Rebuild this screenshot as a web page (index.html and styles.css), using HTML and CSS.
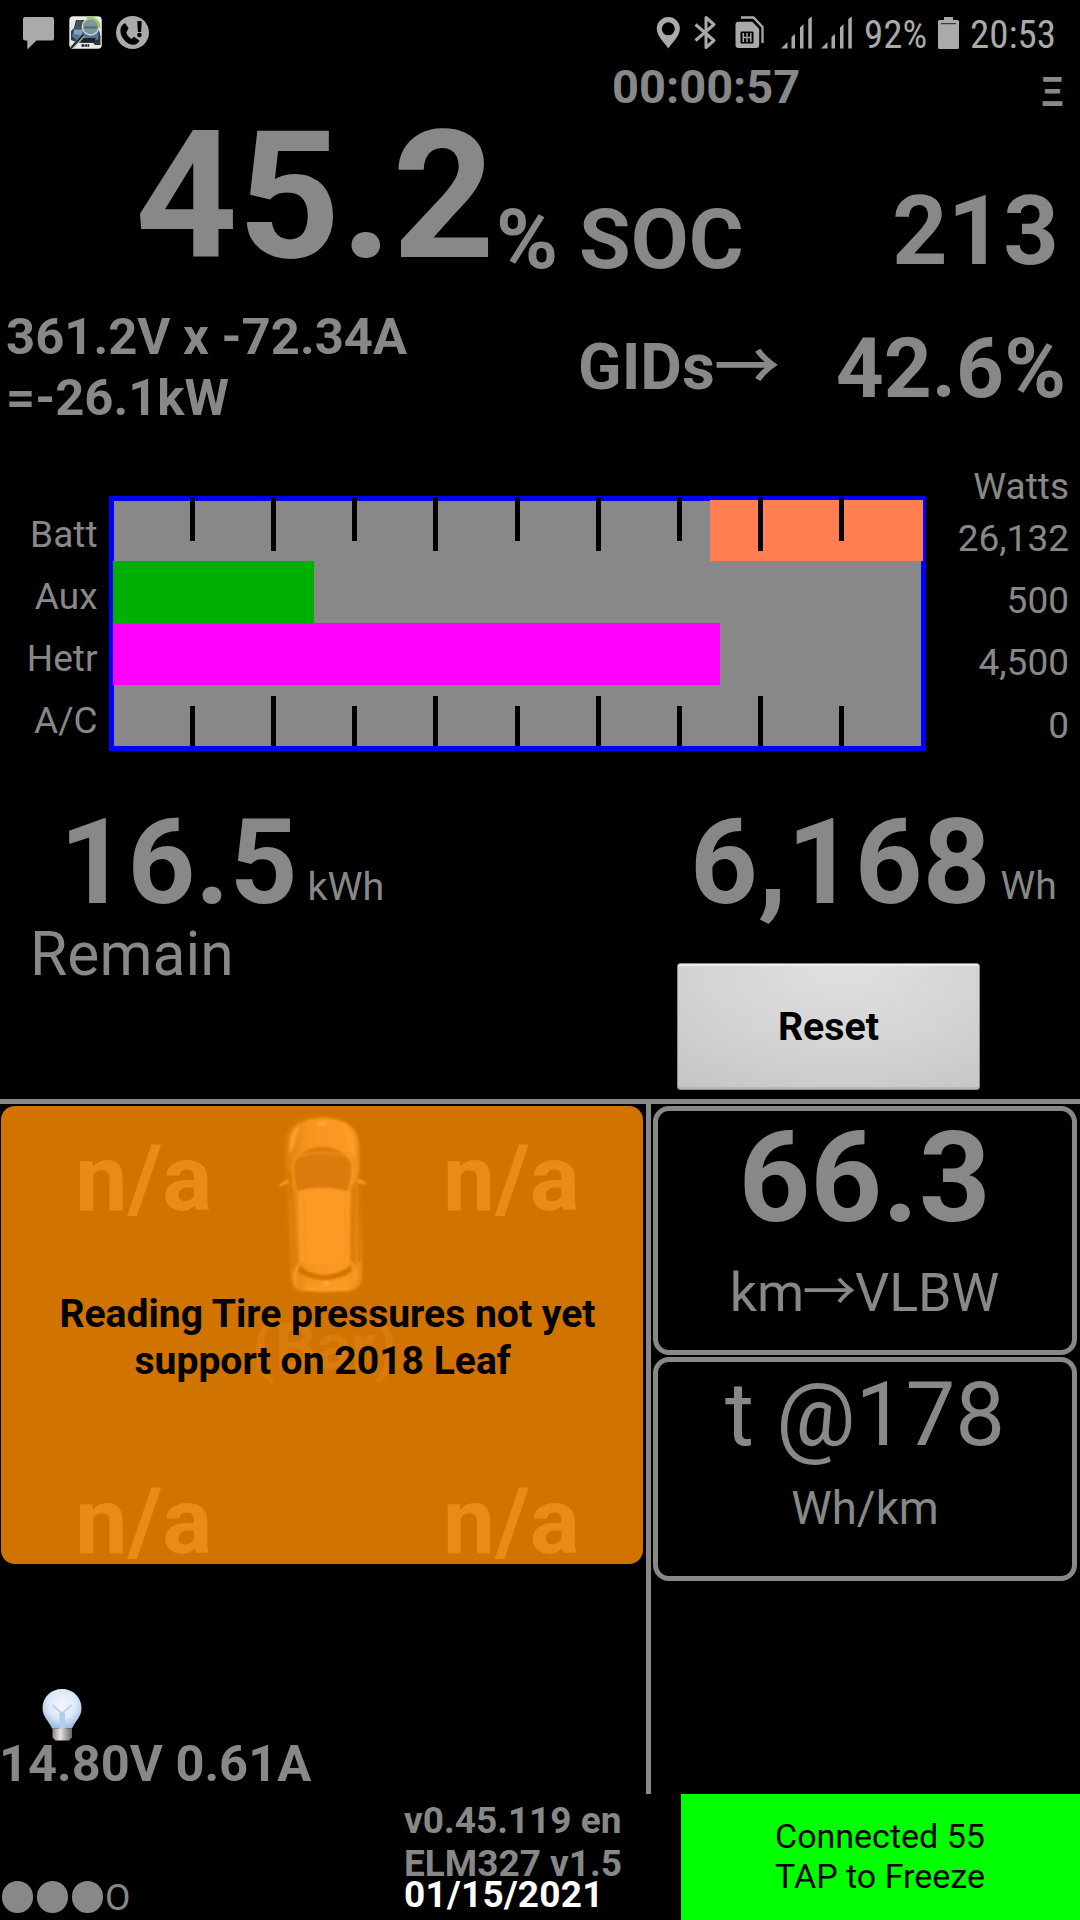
FILE: index.html
```html
<!DOCTYPE html>
<html lang="en">
<head>
<meta charset="utf-8">
<title>Battery monitor</title>
<link rel="stylesheet" href="styles.css">
</head>
<body>
<div class="screen">
  <header class="statusbar">
    <svg class="status-left" width="126" height="33" viewBox="23 16 126 33">
      <path fill="#aaa" d="M25 17h27a2 2 0 0 1 2 2v19.500a2 2 0 0 1-2 2H36.500L27.300 49.500V40.500H25a2 2 0 0 1-2-2V19a2 2 0 0 1 2-2z"/>
      <rect x="69.300" y="16.300" width="32.500" height="32.500" rx="4" fill="#e8eaea"/>
      <path fill="#2c3b40" d="M76 20h19l4 10 1.500 6v9H95l-2-2H79l-3-1-5-2V31l3-3z"/>
      <path fill="#48545a" d="M77 20.500h16l3 8H74.500z"/>
      <path fill="#4f7696" d="M74 28.500h22l3 6-1 5-10 2H78l-6-5z"/>
      <path fill="#7da2bd" d="M74 30h9l-2 5-7-1z"/>
      <path fill="#1a2228" d="M79 38h17l-2 4H82z"/>
      <path stroke="#b9bec0" stroke-width="3.600" d="M72 48 83.500 35"/>
      <path stroke="#222" stroke-width="2" d="M71 48 83.500 34.500"/>
      <circle cx="90.700" cy="26.700" r="8.300" fill="#7c969c" stroke="#ccd2cf" stroke-width="1.500"/>
      <path fill="none" stroke="#9ccb55" stroke-width="2.600" d="M87 18.800a9 9 0 0 1 12 6v3"/>
      <path stroke="#516b75" stroke-width="2" d="M84 27.500h13"/>
      <path stroke="#222" stroke-width="2.500" stroke-dasharray="3 .7 2.300 .5" d="M81.500 45.500h7.700"/>
      <circle cx="132.500" cy="32.500" r="16.500" fill="#aaa"/>
      <path fill="#000" d="M125 23l3.600 5.200-2.300 4.300c.8 2.800 2.600 5.200 5.200 6.500l2.400-2.300 5.500 3.800c-1 2.500-3.200 4.300-6 4.300-6.700 0-13.300-7.600-13-14.800.1-3.200 2-5.800 4.600-7z"/>
      <path fill="#000" d="M137.300 21h4.400l-.6 11h-3.200z"/>
      <circle cx="139.400" cy="35" r="2.300"/>
    </svg>
    <svg class="status-right" width="196" height="34" viewBox="656 16 196 34">
      <path fill="#aaa" fill-rule="evenodd" d="M668.300 17a11.600 11.600 0 0 1 11.600 11.600c0 7-6.500 13-11.600 19.900-5-6.900-11.600-12.900-11.600-19.900A11.600 11.600 0 0 1 668.300 17zm0 5.300a6.500 6.500 0 1 0 0 13 6.500 6.500 0 0 0 0-13z"/>
      <path fill="none" stroke="#aaa" stroke-width="3" stroke-linejoin="round" d="M695.500 24.500 714 40.500 706 47.500V17.500L714 24.500 695.500 40.500"/>
      <path fill="none" stroke="#aaa" stroke-width="2.300" d="M741 17.500h12.500l9 9.500v16"/>
      <path fill="#aaa" d="M738.500 21.700h13.800l6.900 7V45a3 3 0 0 1-3 3h-17.700a3 3 0 0 1-3-3V24.700a3 3 0 0 1 3-3z"/>
      <rect x="740.500" y="31.500" width="13" height="12" rx="1" fill="#000"/>
      <path fill="none" stroke="#aaa" stroke-width="1.500" d="M743.300 33v9M747 33v3.500M747 38.500v3.500M750.800 33v9M742.800 37.500h8.500"/>
      <path fill="#aaa" d="M781 48.500 787.500 42v6.500zM791.500 37l3.500-3v14.500h-3.500zM800 27.500l3.500-3.200v24.200H800zM808.300 19l3.500-2.500v32h-3.500z"/>
      <path fill="#aaa" d="M821 48.500 827.500 42v6.500zM831.500 37l3.500-3v14.500h-3.500zM840 27.500l3.500-3.200v24.200H840zM848.300 19l3.500-2.500v32h-3.500z"/>
    </svg>
    <span class="status-text battery-pct">92%</span>
    <svg class="battery" width="21" height="32" viewBox="0 0 21 32">
      <path fill="#aaa" d="M6 0h9v3h4.500a1.500 1.500 0 0 1 1.500 1.500V30.500a1.500 1.500 0 0 1-1.500 1.500h-18A1.500 1.500 0 0 1 0 30.500V4.500A1.500 1.500 0 0 1 1.500 3H6z"/>
      <path stroke="#222" stroke-width="1" d="M3 6.700h15"/>
    </svg>
    <span class="status-text clock">20:53</span>
  </header>

  <div class="trip-row">
    <span class="timer">00:00:57</span>
    <span class="menu">Ξ</span>
  </div>

  <div class="soc-row">
    <span class="soc">45.2</span>
    <span class="soc-unit">% SOC</span>
    <span class="gids">213</span>
  </div>

  <div class="power-row">
    <p class="power">361.2V x -72.34A<br>=-26.1kW</p>
    <span class="gids-label">GIDs<span class="arrow bold-arrow">→</span></span>
    <span class="gids-pct">42.6%</span>
  </div>

  <section class="usage">
    <div class="labels"><span>Batt</span><span>Aux</span><span>Hetr</span><span>A/C</span></div>
    <svg class="chart" width="817" height="256" viewBox="109 496 817 256" shape-rendering="crispEdges">
      <rect x="109" y="496" width="817" height="255" fill="#00f"/>
      <rect x="114" y="501" width="807" height="245" fill="#888"/>
      <rect x="710" y="500" width="213" height="61" fill="#ff7f50"/>
      <rect x="113" y="561" width="201" height="62" fill="#00b000"/>
      <rect x="113" y="623" width="607" height="62" fill="#f0f"/>
      <path fill="none" stroke="#000" stroke-width="5" d="M192.500 497v44M273.500 497v54M354.500 497v44M435.500 497v54M517.500 497v44M598.500 497v54M679.500 497v44M760.500 497v54M841.500 497v44M192.500 706v40M273.500 696v50M354.500 706v40M435.500 696v50M517.500 706v40M598.500 696v50M679.500 706v40M760.500 696v50M841.500 706v40"/>
    </svg>
    <div class="watts"><span class="watts-title">Watts</span><span>26,132</span><span>500</span><span>4,500</span><span>0</span></div>
  </section>

  <section class="energy">
    <div class="remain">
      <div class="reading"><span class="big">16.5</span><span class="unit">kWh</span></div>
      <span class="remain-label">Remain</span>
    </div>
    <div class="used">
      <div class="reading"><span class="big">6,168</span><span class="unit">Wh</span></div>
      <button class="reset" type="button">Reset</button>
    </div>
  </section>

  <main class="lower">
    <div class="left">
      <section class="tires">
        <div class="tire-row"><span>n/a</span><span>n/a</span></div>
        <div class="tire-row"><span>n/a</span><span>n/a</span></div>
        <svg class="car" width="100" height="190" viewBox="275 1110 100 190">
          <defs>
            <linearGradient id="body" x1="0" x2="1"><stop offset="0" stop-color="#de8110"/><stop offset=".3" stop-color="#f8961f"/><stop offset=".8" stop-color="#fb9922"/><stop offset="1" stop-color="#e98c18"/></linearGradient>
            <filter id="soft" x="-20%" y="-10%" width="140%" height="120%"><feGaussianBlur stdDeviation="2"/></filter>
            <filter id="fine"><feGaussianBlur stdDeviation=".8"/></filter>
          </defs>
          <path fill="#dc7e0d" filter="url(#soft)" d="M286 1145c0-18 12-27 35-28 24 0 37 10 38 28l4 130c0 10-6 17-16 17h-42c-8 0-11-6-11-14z"/>
          <g filter="url(#fine)">
            <path fill="url(#body)" d="M288 1146c0-17 12-27 35-28 24 0 36 10 37 28l3 130c0 9-6 14-15 15h-44c-8 0-11-6-12-14z"/>
            <path fill="none" stroke="#d27606" stroke-width="2.500" d="M291 1172l3 96M360 1172v90"/>
            <path fill="#ff9f2c" d="M301 1124c-8 6-12 14-10 30 5-8 7-20 10-30zM344 1124c10 6 13 18 12 36-6-9-9-24-12-36z"/>
            <path fill="#ff9f2c" d="M280 1187c1-4 5-6 9-7v3zM359 1179c4 1 8 3 9 6l-10-3z"/>
            <path fill="#d97c0b" stroke="#f9971f" stroke-width="1.500" d="M294 1164c6-12 16-18 29-18s24 6 30 18c0 9-1 20-4 28-17-5-35-5-51 0-3-8-4-20-4-28z"/>
            <path fill="none" stroke="#ea8b18" stroke-width="2.500" d="M301 1156c13-4 33-4 45 0"/>
            <path fill="#de7f0e" d="M295 1187l4 78-5 6-4-70zM352 1187l-2 76 7 6 1-90z"/>
            <path fill="#fd9a26" d="M299 1192c17-4 34-4 51 0l1 70c-17 2-33 2-50 0z"/>
            <path fill="none" stroke="#ee8d19" d="M304 1194l3 67M346 1194v67"/>
            <path fill="none" stroke="#ff9e2a" stroke-width="2" d="M300 1264c-4 6-5 14-3 22M352 1262c5 6 6 13 3 20"/>
            <path fill="#d17400" d="M300 1265c14 13 36 13 52 0l1 6c-14 12-38 12-54 1z"/>
            <path fill="none" stroke="#ffa12e" stroke-width="2.500" d="M306 1288c12 3 29 3 43 0"/>
            <path fill="#ffac40" d="M319 1122h8v3h-8zM325 1281h5v4h-5z"/>
          </g>
        </svg>
        <span class="tire-unit">(Bar)</span>
        <p class="tire-note">Reading Tire pressures not yet<br>support on 2018 Leaf&nbsp;</p>
      </section>
      <div class="aux">
        <svg class="bulb" width="42" height="54" viewBox="0 0 42 54">
          <defs>
            <radialGradient id="glass" cx=".5" cy=".38" r=".6"><stop offset="0" stop-color="#f1f6ff"/><stop offset=".6" stop-color="#dde9fa"/><stop offset="1" stop-color="#a3bfe6"/></radialGradient>
            <linearGradient id="cap" x1="0" x2="1"><stop offset="0" stop-color="#8f8a89"/><stop offset=".4" stop-color="#e8e2e0"/><stop offset="1" stop-color="#686463"/></linearGradient>
            <filter id="glow"><feGaussianBlur stdDeviation=".7"/></filter>
          </defs>
          <g filter="url(#glow)">
            <path fill="url(#glass)" d="M22 1c11 0 19.500 8 19.500 19 0 9-6 12.500-9.500 20.500H12C9 33 2.500 29 2.500 20 2.500 9 11 1 22 1z"/>
            <path fill="#b3cdea" d="M19.500 25h5.500v16h-5.500z"/>
            <path fill="none" stroke="#bdc8dc" stroke-width="1.500" d="M12.500 17l9.500 8.500 9.500-8.500"/>
            <path fill="url(#cap)" d="M12.500 40.500h19.500v9l-3 3H15.500l-3-3z"/>
          </g>
        </svg>
        <span class="aux-reading">14.80V 0.61A</span>
      </div>
    </div>
    <div class="right">
      <section class="card range"><span class="range-value">66.3</span><span class="range-unit">km<span class="arrow thin-arrow">→</span>VLBW</span></section>
      <section class="card rate"><span class="rate-value">t @178</span><span class="rate-unit">Wh/km</span></section>
    </div>
  </main>

  <footer class="footer">
    <div class="pages"><i></i><i></i><i></i><span>O</span></div>
    <div class="about"><span>v0.45.119 en</span><span>ELM327 v1.5</span><span class="date">01/15/2021</span></div>
    <div class="connection">Connected 55<br>TAP to Freeze</div>
  </footer>
</div>
</body>
</html>
```
FILE: styles.css
```css
* { box-sizing: border-box; }

body {
  margin: 0;
  background: #000;
  color: #888;
  font-family: Roboto, "Noto Sans CJK JP", sans-serif;
  line-height: 1;
}

p { margin: 0; }
svg { display: block; flex: none; }

.screen {
  width: 1080px;
  height: 1920px;
  overflow: hidden;
}

/* status bar */
.statusbar {
  display: flex;
  align-items: flex-start;
  height: 60px;
  padding: 16px 0 0 23px;
  color: #aaa;
}
.status-right { margin-left: 507px; }
.status-text {
  font-family: "Roboto Condensed", Roboto, sans-serif;
  font-size: 39px;
  white-space: nowrap;
}
.battery-pct { width: 74px; margin-left: 12px; }
.battery { margin-top: 1px; }
.clock { margin-left: 11px; }

/* trip timer */
.trip-row {
  display: flex;
  justify-content: space-between;
  height: 46px;
  padding: 3px 16px 0 612px;
  font-weight: 700;
}
.timer { font-size: 47px; }
.menu { padding-top: 9px; font-size: 41px; }

/* state of charge */
.soc-row {
  display: flex;
  height: 190px;
  padding: 1px 21px 0 135px;
  font-weight: 700;
}
.soc { font-size: 179px; }
.soc-unit { margin: 91px 0 0 1px; font-size: 84px; }
.gids { margin: 76px 0 0 auto; font-size: 97px; }

/* pack power */
.power-row {
  display: flex;
  height: 164px;
  padding: 1px 14px 0 6px;
  font-weight: 700;
}
.power { width: 572px; padding-top: 10px; font-size: 50.8px; line-height: 60.6px; }
.gids-label { padding-top: 39px; font-size: 64px; white-space: nowrap; }
.gids-pct { margin: 30px 0 0 auto; font-size: 83.7px; }
.arrow { font-family: "Noto Sans CJK JP", sans-serif; font-weight: 400; line-height: 0; }
.bold-arrow { -webkit-text-stroke: 1.5px #888; }
.thin-arrow { margin: 0 -1.5px; }

/* usage chart */
.usage {
  display: grid;
  grid-template-columns: 109px 817px 154px;
  height: 320px;
  font-size: 37px;
  line-height: 62.3px;
}
.labels, .watts { display: flex; flex-direction: column; text-align: right; }
.labels { padding: 43.6px 11.500px 0 0; }
.chart { margin-top: 36px; }
.watts { padding: 7.5px 11px 0 0; }
.watts-title { margin-bottom: 3.3px; line-height: 37px; }

/* energy */
.energy {
  display: grid;
  grid-template-columns: 660px 420px;
  height: 319px;
  padding-top: 24px;
}
.reading { display: flex; height: 118px; }
.big { font-size: 118.3px; font-weight: 700; }
.unit { margin: 63px 0 0 10px; font-size: 39.5px; }
.remain { padding-left: 59.6px; }
.remain-label { display: block; margin: 3px 0 0 -29.5px; font-size: 60.5px; }
.used { padding-left: 30px; }
.used .unit { font-size: 39.1px; }
.reset {
  display: block;
  width: 303px;
  height: 127px;
  margin: 41px 0 0 -13px;
  padding: 3px 0 0;
  border: 1px solid #8d8d8d;
  border-radius: 3px;
  background: radial-gradient(ellipse 260px 150px at 55% 0, #e0e0e0, #d4d4d4 55%, #c6c6c6);
  box-shadow: inset 0 2px 1px #ececec, inset 0 -2px 1px #b5b5b5;
  color: #000;
  font: 700 39.3px/1 Roboto, sans-serif;
}

/* lower panels */
.lower {
  display: grid;
  grid-template-columns: 651px 429px;
  height: 695px;
  border-top: 5px solid #888;
}
.left {
  display: flex;
  flex-direction: column;
  justify-content: space-between;
  padding: 2px 3px 4px 1px;
  border-right: 5px solid #888;
}
.tires {
  position: relative;
  display: flex;
  flex-direction: column;
  justify-content: space-between;
  height: 458px;
  padding-top: 26px;
  border-radius: 14px;
  background: #d17300;
  color: #eb8b17;
}
.tire-row {
  display: grid;
  grid-template-columns: 367.5px 1fr;
  padding-left: 74.3px;
  font-size: 93.4px;
  font-weight: 700;
}
.tire-row span { height: 89px; }
.car { position: absolute; left: 273px; top: 4px; }
.tire-unit {
  position: absolute;
  left: 251px;
  top: 209px;
  color: #d87c0d;
  font-size: 65px;
  font-weight: 700;
}
.tire-note {
  position: absolute;
  left: 48px;
  right: 37px;
  top: 185px;
  color: #000;
  font-size: 39.1px;
  font-weight: 700;
  line-height: 47px;
  text-align: center;
}
.aux { display: flex; flex-direction: column; }
.bulb { margin-left: 39px; }
.aux-reading { margin: -3px 0 0 -2px; font-size: 50.6px; font-weight: 700; }

.right {
  display: flex;
  flex-direction: column;
  gap: 2px;
  padding: 2px 3px 0 2px;
}
.card {
  display: flex;
  flex-direction: column;
  align-items: center;
  border: 5px solid #888;
  border-radius: 16px;
}
.range { height: 249px; padding: 5px 1px 0 0; }
.range-value { font-size: 125.4px; font-weight: 700; }
.range-unit { margin-top: 25px; font-size: 53.8px; }
.rate { height: 224px; padding-top: 9px; }
.rate-value { font-size: 88.7px; }
.rate-unit { margin-top: 26.6px; font-size: 45.6px; }

/* footer */
.footer {
  display: grid;
  grid-template-columns: 404px 277px 399px;
  height: 126px;
  line-height: 43px;
}
.pages { display: flex; gap: 3.5px; padding: 87px 0 0 1.5px; }
.pages i { width: 31.5px; height: 31.5px; border-radius: 50%; background: #888; }
.pages span { margin: -.5px 0 0 -1.5px; font-size: 37px; line-height: 33px; }
.about {
  display: flex;
  flex-direction: column;
  padding-top: 4.5px;
  font-size: 37px;
  font-weight: 700;
  white-space: nowrap;
}
.date { margin-top: -12px; color: #fff; letter-spacing: .25px; }
.connection {
  padding: 22px 0 0 94px;
  background: #0f0;
  color: #000;
  font-size: 34px;
  line-height: 40.3px;
}
```
